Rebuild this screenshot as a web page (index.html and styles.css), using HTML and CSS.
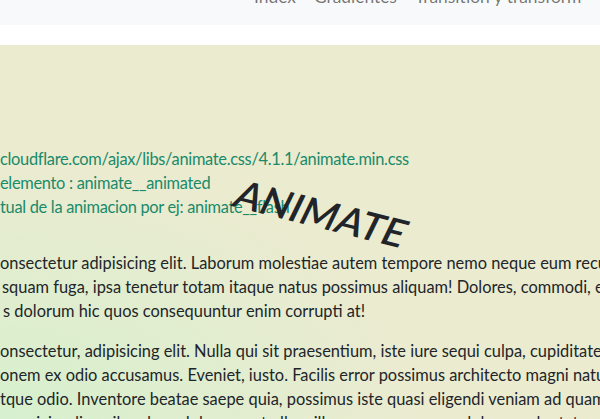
FILE: index.html
```html
<!DOCTYPE html>
<html lang="es">
<head>
<meta charset="utf-8">
<title>Animaciones</title>
<link rel="stylesheet" href="styles.css">
</head>
<body>
<nav class="navbar">
  <ul class="nav-links">
    <li><a href="#">Index</a></li>
    <li><a href="#">Gradientes</a></li>
    <li><a href="#">Transition y transform</a></li>
  </ul>
</nav>
<main class="content">
  <div class="notes">
    <span class="line">cloudflare.com/ajax/libs/animate.css/4.1.1/animate.min.css</span>
    <span class="line">elemento : animate__animated</span>
    <span class="line">tual de la animacion por ej: animate__flash</span>
    <div class="animated-word">ANIMATE</div>
  </div>
  <p class="para">
    <span class="line">onsectetur adipisicing elit. Laborum molestiae autem tempore nemo neque eum recusandae</span>
    <span class="line l2">squam fuga, ipsa tenetur totam itaque natus possimus aliquam! Dolores, commodi, ex</span>
    <span class="line l3">s dolorum hic quos consequuntur enim corrupti at!</span>
  </p>
  <p class="para">
    <span class="line">onsectetur, adipisicing elit. Nulla qui sit praesentium, iste iure sequi culpa, cupiditate a</span>
    <span class="line">onem ex odio accusamus. Eveniet, iusto. Facilis error possimus architecto magni natus</span>
    <span class="line">tque odio. Inventore beatae saepe quia, possimus iste quasi eligendi veniam ad quam</span>
    <span class="line">ue reiciendis quibusdam, dolore amet ullam illum nemo magnam dolores voluptatem repellat</span>
  </p>
</main>
</body>
</html>
```
FILE: styles.css
```css
html, body {
  margin: 0;
  padding: 0;
  overflow: hidden;
}
body {
  font-family: Lato, "Open Sans", sans-serif;
  font-size: 16.4px;
  line-height: 24px;
  color: #212529;
  background: #ffffff;
  width: 600px;
  height: 419px;
}
.navbar {
  background: #f8f9fa;
  height: 25px;
  position: relative;
  overflow: hidden;
}
.nav-links {
  list-style: none;
  margin: 0;
  padding: 0;
  display: flex;
  gap: 18px;
  margin-top: -15px;
  margin-left: 254px;
  font-size: 17.4px;
  white-space: nowrap;
}
.nav-links li {
  flex-shrink: 0;
}
.nav-links a {
  display: block;
  color: rgba(0, 0, 0, 0.55);
  text-decoration: none;
}
.content {
  margin-top: 20px;
  height: 374px;
  background:
    radial-gradient(ellipse 420px 260px at 0% 100%, rgba(214, 240, 206, 1) 0%, rgba(214, 240, 206, 0.6) 40%, rgba(235, 235, 208, 0) 100%),
    #ebebd0;
  padding-top: 102px;
  box-sizing: border-box;
  overflow: hidden;
}
.line {
  display: block;
  white-space: nowrap;
  overflow: hidden;
}
.notes {
  position: relative;
  color: #198a6a;
  margin-bottom: 32px;
  letter-spacing: -0.3px;
}
.animated-word {
  position: absolute;
  left: 237px;
  top: 25px;
  color: #212529;
  font-size: 39px;
  font-weight: 600;
  line-height: 40px;
  letter-spacing: 0;
  transform: rotate(14deg) skewX(-12deg);
  transform-origin: left center;
}
.para {
  margin: 0 0 16px 0;
}
.l2 { padding-left: 2px; }
.l3 { padding-left: 3px; }
```
